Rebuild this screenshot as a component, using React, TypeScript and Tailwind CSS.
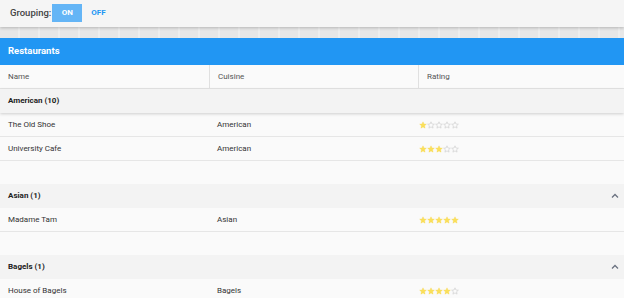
import React from "react";

type Row = { name: string; cuisine: string; rating: number };
type Group = { title: string; rows: Row[]; spacer?: boolean; chevron?: boolean };

const groups: Group[] = [
  {
    title: "American (10)",
    rows: [
      { name: "The Old Shoe", cuisine: "American", rating: 1 },
      { name: "University Cafe", cuisine: "American", rating: 3 },
    ],
    spacer: true,
  },
  {
    title: "Asian (1)",
    chevron: true,
    rows: [{ name: "Madame Tam", cuisine: "Asian", rating: 5 }],
    spacer: true,
  },
  {
    title: "Bagels (1)",
    chevron: true,
    rows: [{ name: "House of Bagels", cuisine: "Bagels", rating: 4 }],
  },
];

const Star = ({ filled }: { filled: boolean }) => (
  <svg width="8" height="8" viewBox="0 0 24 24">
    <path
      d="M12 2.5l2.9 6.6 7.1.6-5.4 4.7 1.6 7-6.2-3.7-6.2 3.7 1.6-7L2 9.7l7.1-.6z"
      fill={filled ? "#fbe05a" : "none"}
      stroke={filled ? "#f7d640" : "#cfcfcf"}
      strokeWidth={filled ? 1 : 2}
    />
  </svg>
);

const Stars = ({ n }: { n: number }) => (
  <div className="flex">
    {[0, 1, 2, 3, 4].map((i) => (
      <Star key={i} filled={i < n} />
    ))}
  </div>
);

const Chevron = () => (
  <svg width="8" height="6" viewBox="0 0 8 6">
    <path d="M1 4.5L4 1.5L7 4.5" fill="none" stroke="#6b7280" strokeWidth="1.3" />
  </svg>
);

export default function App() {
  return (
    <div
      className="w-[624px] h-[298px] overflow-hidden bg-[#fafafa] text-[#333]"
      style={{ fontFamily: "Roboto, 'Liberation Sans', sans-serif" }}
    >
      {/* toolbar */}
      <div className="relative z-10 h-[27px] bg-[#f5f5f5] flex items-center pl-[10px] shadow-[0_1px_3px_rgba(0,0,0,0.22)]">
        <span className="text-[9.5px] font-medium text-[#444]">Grouping:</span>
        <span className="ml-[1px] mt-[-2px] h-[18px] w-[30px] bg-[#64b5f6] text-white text-[8px] font-bold flex items-center justify-center">
          ON
        </span>
        <span className="ml-[9px] mt-[-2px] text-[8px] font-bold text-[#2196f3]">OFF</span>
      </div>

      {/* striped band */}
      <div className="h-[11px] bg-[repeating-linear-gradient(90deg,#e7e7e7_0px,#e7e7e7_18px,#eeeeee_18px,#eeeeee_20px)]" />

      {/* title */}
      <div className="h-[27px] bg-[#2196f3] flex items-center pl-[8px]">
        <span className="text-white text-[9.5px] font-bold">Restaurants</span>
      </div>

      {/* column headers */}
      <div className="grid grid-cols-[209px_209px_1fr] h-[24px] bg-[#fafafa] border-b border-[#e5e5e5] text-[8px] text-[#555]">
        <div className="flex items-center pl-[8px]">Name</div>
        <div className="flex items-center pl-[8px] border-l border-[#e0e0e0]">Cuisine</div>
        <div className="flex items-center pl-[8px] border-l border-[#e0e0e0]">Rating</div>
      </div>

      {groups.map((g) => (
        <div key={g.title}>
          <div
            className={
              "relative h-[24px] bg-[#f3f3f3] flex items-center justify-between pl-[8px] pr-[5px] " +
              (g.chevron ? "" : "shadow-[0_1px_3px_rgba(0,0,0,0.18)] z-[1]")
            }
          >
            <span className="text-[8px] font-bold text-[#222]">{g.title}</span>
            {g.chevron && <Chevron />}
          </div>
          {g.rows.map((r) => (
            <div
              key={r.name}
              className="grid grid-cols-[209px_209px_1fr] h-[24px] bg-[#fafafa] border-b border-[#e6e6e6] text-[8px] text-[#333]"
            >
              <div className="flex items-center pl-[8px]">{r.name}</div>
              <div className="flex items-center pl-[8px]">{r.cuisine}</div>
              <div className="flex items-center pl-[1px]">
                <Stars n={r.rating} />
              </div>
            </div>
          ))}
          {g.spacer && <div className="h-[23px] bg-[#fafafa]" />}
        </div>
      ))}
    </div>
  );
}
